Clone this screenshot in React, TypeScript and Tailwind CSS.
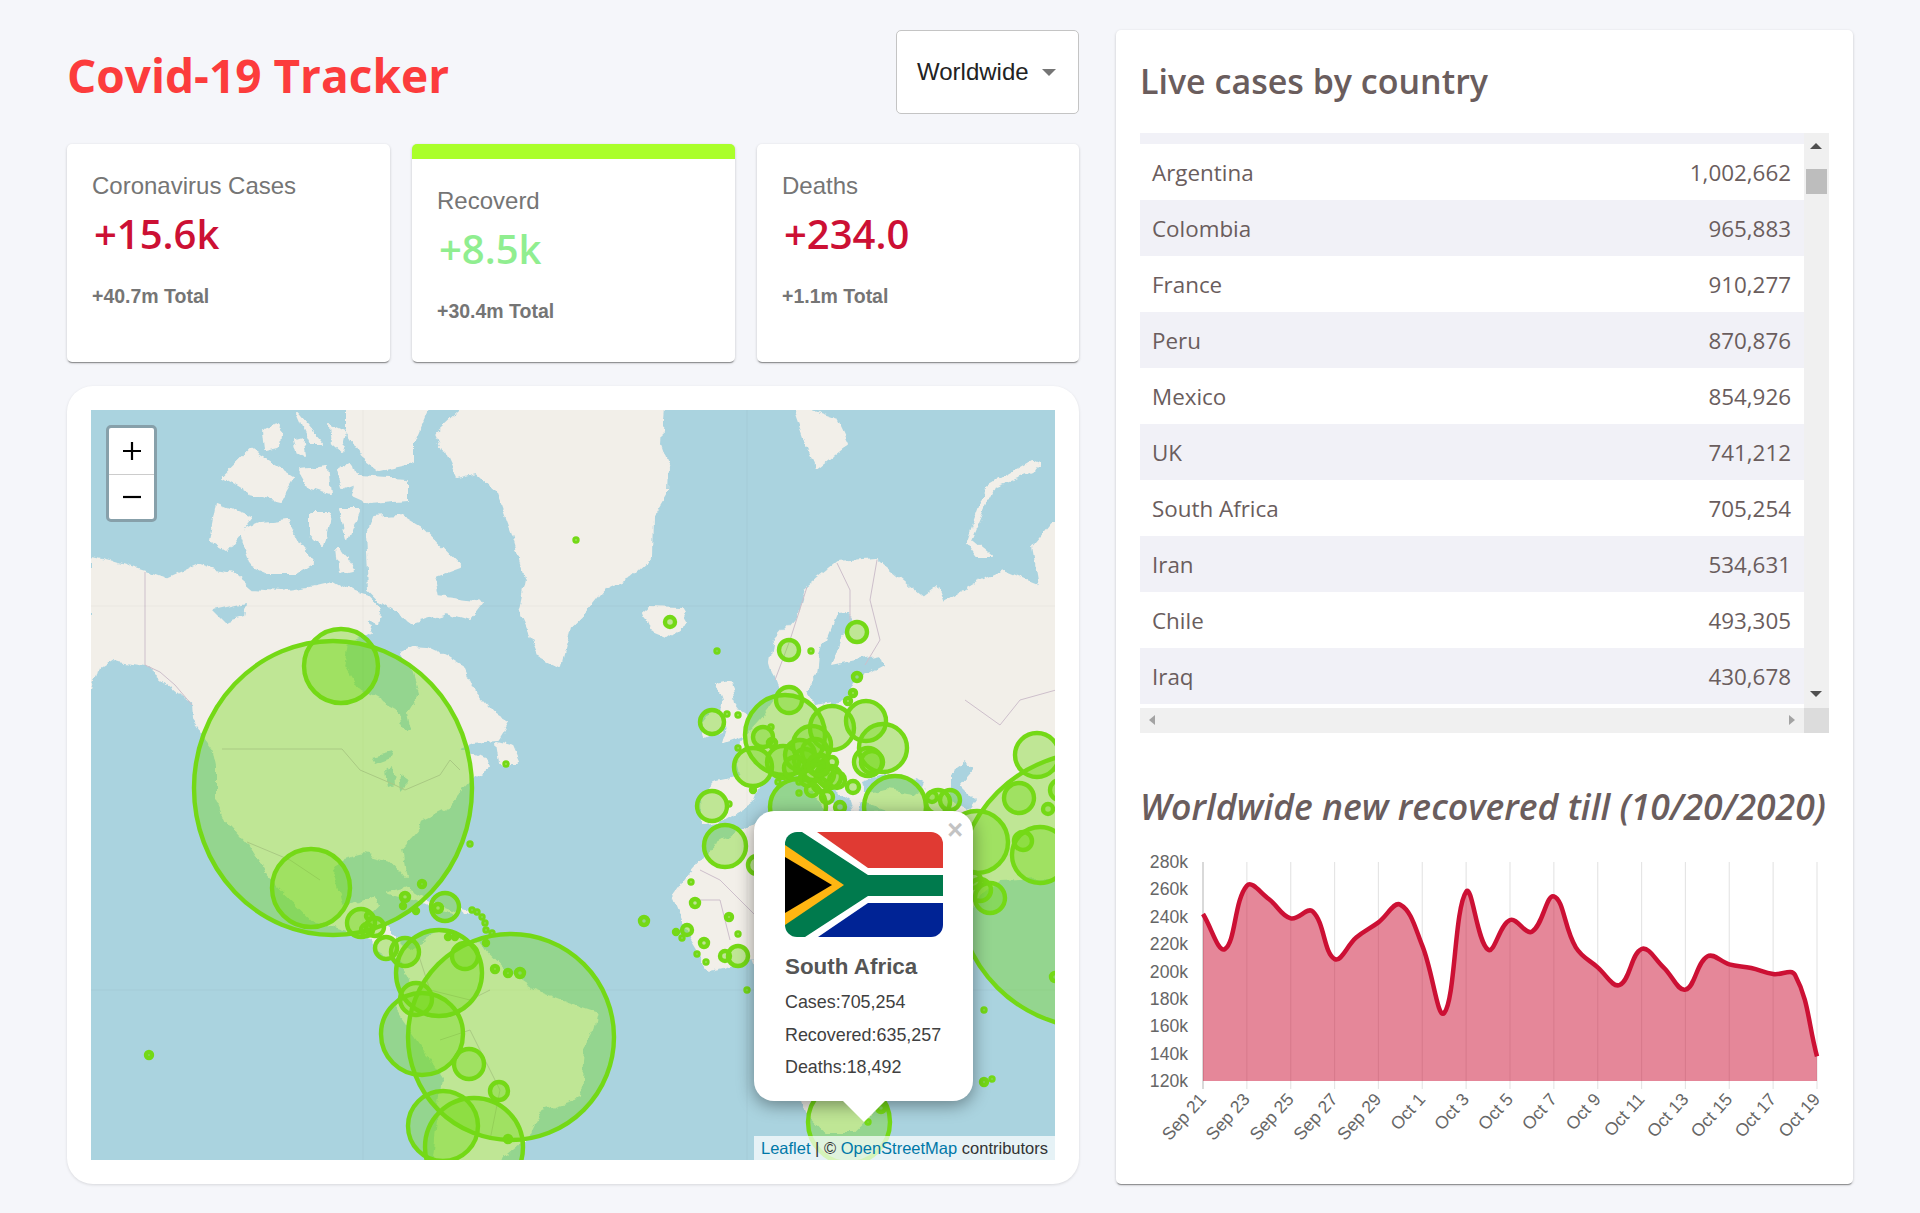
const countries = [
  ['Argentina', '1,002,662'],
  ['Colombia', '965,883'],
  ['France', '910,277'],
  ['Peru', '870,876'],
  ['Mexico', '854,926'],
  ['UK', '741,212'],
  ['South Africa', '705,254'],
  ['Iran', '534,631'],
  ['Chile', '493,305'],
  ['Iraq', '430,678'],
];

// land shapes, in page pixels (the map svg has a matching viewBox)
const land = [
  '91,557 113,562 145,572 167,580 200,565 215,570 233,573 253,590 280,592 307,588 333,582 347,590 370,597 380,607 377,623 363,617 373,633 347,643 343,667 357,690 373,697 397,710 400,723 405,733 412,730 408,713 420,693 413,670 400,653 413,647 427,648 447,657 463,667 473,690 493,713 508,722 497,740 473,742 460,747 488,760 490,767 473,777 447,807 420,820 418,830 400,850 405,877 397,867 390,860 363,853 343,858 333,873 343,907 360,903 373,897 377,907 367,917 390,927 390,933 400,943 413,950 400,957 427,940 443,933 473,943 487,953 507,973 533,990 567,1003 597,1013 593,1030 583,1047 580,1097 540,1110 527,1137 503,1157 500,1165 433,1165 443,1077 413,1033 397,1010 398,1003 410,977 400,957 387,960 373,940 347,930 313,920 283,890 267,873 247,842 227,820 217,797 217,767 213,747 193,720 192,703 160,677 145,665 113,660 97,670 91,693',
  '467,405 663,405 660,443 668,467 667,493 653,517 652,557 630,577 603,590 587,610 570,627 560,667 540,657 520,613 527,580 513,533 497,490 477,472 457,477 437,433',
  '347,405 428,405 413,440 413,463 380,470 363,457 347,433',
  '357,477 407,480 407,500 370,503 352,495',
  '367,533 373,517 400,515 420,527 460,567 433,577 437,597 483,603 470,620 447,613 413,623 395,610 380,600 370,590',
  '240,533 263,523 287,520 300,547 313,563 297,573 267,573 253,567',
  '210,540 217,503 253,517 227,550',
  '223,477 250,450 293,477 280,500 250,493',
  '300,470 327,467 330,493 310,487',
  '297,413 323,443 310,443',
  '310,513 330,513 323,547 310,533',
  '340,510 360,510 347,540',
  '337,547 353,570 340,573',
  '263,430 280,425 278,447 265,450',
  '337,470 352,462 358,482 342,488',
  '330,425 345,432 340,452 332,445',
  '295,440 302,438 305,456 298,452',
  '497,743 513,747 520,763 500,763',
  '793,405 837,420 848,443 817,467 805,440',
  '1040,463 1033,472 993,487 970,540 990,557 977,557 967,543 987,487 1033,460',
  '770,663 773,643 800,613 807,587 837,563 877,560 922,597 897,617 937,587 943,603 977,583 1003,572 1040,587 1033,547 1053,523 1065,523 1065,880 1040,878 1000,880 980,895 960,925 873,1113 853,1133 827,1133 807,1113 753,960 710,970 690,937 673,897 690,873 713,847 757,823 800,815 900,812 920,800 895,812 860,800 855,815 850,800 815,775 838,808 830,812 800,775 780,773 760,783 752,803 723,820 703,823 702,797 713,783 740,777 737,757 740,743 763,717 780,693 775,680',
  '717,683 730,680 735,703 748,720 743,735 723,742 728,727 722,722 723,700',
  '702,723 712,710 725,712 722,730 705,738',
  '643,613 650,607 680,608 688,622 667,637 650,630',
  '387,892 403,888 427,902 457,913 433,907 417,900',
  '463,910 470,912 465,914',
];

// inland water drawn over the land
const water = [
  '820,655 837,613 848,612 853,622 840,640 832,665 880,655 883,665 855,680 845,700 815,705 805,690 818,675',
  '862,782 880,775 900,775 925,785 920,795 885,790 865,795',
  '950,773 965,762 975,768 960,785 975,800 968,810 950,800',
  '213,610 245,603 243,617 225,622',
  '372,757 392,752 395,757 376,764',
  '385,770 392,765 394,785 388,787',
  '398,775 408,782 400,790',
];

const borders = [
  '145,572 145,665 160,672 175,685 192,705',
  '222,749 342,749 360,770 395,785 405,790 440,775 450,760 460,770',
  '247,842 290,860 320,880',
  '807,587 790,640 775,680',
  '837,563 850,590 850,620',
  '877,560 870,600 880,640 865,665',
  '965,700 1000,725 1020,700 1056,690',
  '417,950 430,990 470,1000 490,990',
  '440,1040 470,1030 500,1090 490,1140',
  '700,870 720,880 760,920',
  '690,900 720,900 730,940',
];

// [cx, cy, outer radius, outer radius on y when the circle is stretched]
const circles = [
  [333, 788, 141, 149], [341, 666, 39], [311, 888, 41], [511, 1037, 105], [439, 973, 45], [422, 1034, 43],
  [443, 1126, 37], [474, 1147, 51], [416, 999, 18], [465, 956, 15], [469, 1064, 17], [499, 1091, 11],
  [508, 1139, 5], [361, 923, 16], [375, 927, 11], [367, 930, 8], [369, 916, 5], [386, 948, 13], [405, 952, 16],
  [405, 897, 6], [403, 906, 4], [416, 911, 4], [422, 884, 5], [445, 907, 16], [438, 908, 6],
  [472, 910, 3], [477, 912, 3], [482, 917, 3], [485, 923, 3], [486, 930, 3], [486, 943, 4], [492, 933, 3],
  [448, 937, 4], [455, 937, 4], [495, 969, 5], [508, 973, 5], [520, 973, 6], [149, 1055, 5], [470, 844, 3],
  [506, 764, 3], [576, 540, 3], [670, 622, 7], [717, 651, 3], [789, 650, 12], [811, 651, 3], [857, 632, 12],
  [857, 677, 6], [853, 693, 5], [848, 701, 5], [712, 722, 14], [727, 714, 3], [738, 715, 3],
  [785, 735, 42], [789, 700, 15], [832, 728, 24], [866, 721, 22], [883, 748, 26], [812, 745, 21], [763, 737, 12],
  [753, 767, 21], [712, 806, 17], [725, 846, 23], [757, 865, 11], [798, 807, 30], [895, 807, 33],
  [783, 762, 18], [805, 760, 13], [813, 770, 12], [830, 777, 13], [837, 780, 10], [853, 787, 8], [840, 807, 7],
  [827, 797, 8], [832, 762, 7], [822, 760, 7], [823, 770, 7], [772, 743, 6], [771, 727, 3], [738, 748, 3],
  [800, 755, 17], [815, 752, 15], [795, 768, 13], [808, 778, 10], [820, 785, 9], [812, 790, 8], [825, 775, 11], [818, 765, 12],
  [753, 790, 4], [778, 782, 3], [799, 782, 3], [799, 793, 3], [729, 804, 3], [868, 762, 16], [872, 762, 13],
  [932, 797, 7], [938, 802, 14], [950, 800, 12], [1037, 755, 24], [1095, 890, 140], [977, 842, 33],
  [1019, 798, 17], [1040, 855, 30], [1023, 841, 11], [1048, 809, 7], [1060, 790, 12], [990, 898, 17],
  [980, 890, 13], [973, 880, 10], [691, 882, 3], [695, 903, 6], [644, 921, 6], [729, 917, 5], [676, 932, 4],
  [687, 930, 7], [682, 938, 3], [704, 943, 6], [697, 954, 3], [706, 962, 3], [738, 934, 3], [725, 956, 7],
  [738, 956, 12], [747, 990, 3], [849, 1122, 43], [881, 1108, 6], [868, 1122, 3], [984, 1010, 3], [984, 1082, 5],
  [992, 1079, 3], [1055, 977, 6],
];

const recovered = [225, 330, 140, 180, 238, 217, 360, 295, 250, 197, 320, 522, 158, 332, 243, 278, 172, 325, 385, 438, 330, 385, 452, 352, 376, 387, 405, 408, 652];

const plotLeft = 1203;
const plotRight = 1817;
const plotBottom = 1082;

// same spline chart.js uses for tension 0.4
const buildLine = () => {
  const step = (plotRight - plotLeft) / (recovered.length - 1);
  const pts = recovered.map((z, i) => ({ x: plotLeft + i * step, y: 840 + z / 3 }));
  let d = `M${pts[0].x} ${pts[0].y}`;
  const ctrl = (i: number) => {
    const cur = pts[i];
    const prev = pts[i - 1] ?? cur;
    const next = pts[i + 1] ?? cur;
    const d01 = Math.hypot(cur.x - prev.x, cur.y - prev.y);
    const d12 = Math.hypot(next.x - cur.x, next.y - cur.y);
    const total = d01 + d12 || 1;
    const fa = (0.4 * d01) / total;
    const fb = (0.4 * d12) / total;
    return {
      inX: cur.x - fa * (next.x - prev.x),
      inY: cur.y - fa * (next.y - prev.y),
      outX: cur.x + fb * (next.x - prev.x),
      outY: cur.y + fb * (next.y - prev.y),
    };
  };
  for (let i = 1; i < pts.length; i++) {
    const a = ctrl(i - 1);
    const b = ctrl(i);
    d += ` C${a.outX} ${a.outY} ${b.inX} ${b.inY} ${pts[i].x} ${pts[i].y}`;
  }
  return d;
};

const yTicks = ['280k', '260k', '240k', '220k', '200k', '180k', '160k', '140k', '120k'];
const xTicks = ['Sep 21', 'Sep 23', 'Sep 25', 'Sep 27', 'Sep 29', 'Oct 1', 'Oct 3', 'Oct 5', 'Oct 7', 'Oct 9', 'Oct 11', 'Oct 13', 'Oct 15', 'Oct 17', 'Oct 19'];

function InfoBox({ title, cases, total, active, green }: { title: string; cases: string; total: string; active?: boolean; green?: boolean }) {
  return (
    <div className={`h-[218px] bg-white rounded-[5px] overflow-hidden shadow-[0_2px_1px_-1px_rgba(0,0,0,0.35),0_1px_3px_rgba(0,0,0,0.2)] ${active ? 'border-t-[15px] border-[#aaff2a]' : ''}`}>
      <div className="px-[25px] pt-[26px]">
        <p className="font-['Liberation_Sans',sans-serif] text-[24px] leading-[32px] text-[#757575]">{title}</p>
        <p className={`font-['Open_Sans',sans-serif] font-semibold text-[40px] leading-[56px] mt-[4px] ml-[2px] ${green ? 'text-[#90ee90]' : 'text-[#cc1034]'}`}>{cases}</p>
        <p className="font-['Liberation_Sans',sans-serif] font-bold text-[19.5px] leading-[24px] mt-[22px] text-[#757575]">{total}</p>
      </div>
    </div>
  );
}

function MapPanel() {
  return (
    <div className="relative h-[750px] overflow-hidden bg-[#aad3df]">
      <svg viewBox="91 410 964 750" className="block w-full h-full">
        <defs>
          {/* roughens the plain polygons into coastlines */}
          <filter id="coast" x="-5%" y="-5%" width="110%" height="110%">
            <feTurbulence type="fractalNoise" baseFrequency="0.07" numOctaves="4" seed="4" result="noise" />
            <feDisplacementMap in="SourceGraphic" in2="noise" scale="9" xChannelSelector="R" yChannelSelector="G" />
            <feGaussianBlur stdDeviation="0.5" />
          </filter>
        </defs>
        <g filter="url(#coast)">
          {land.map((points) => <polygon key={points} points={points} fill="#f2efe9" stroke="#f2efe9" strokeWidth="2" strokeLinejoin="round" />)}
          {water.map((points) => <polygon key={points} points={points} fill="#aad3df" />)}
        </g>
        {borders.map((points) => <polyline key={points} points={points} fill="none" stroke="#cdbfcb" strokeWidth="1" />)}
        <g stroke="#000" strokeOpacity="0.03">
          <line x1="363" y1="410" x2="363" y2="1160" />
          <line x1="747" y1="410" x2="747" y2="1160" />
          <line x1="91" y1="606" x2="1055" y2="606" />
          <line x1="91" y1="990" x2="1055" y2="990" />
        </g>
        {circles.map(([cx, cy, r, ry], i) => (
          <ellipse key={i} cx={cx} cy={cy} rx={Math.max(r - 2, 1.5)} ry={Math.max((ry ?? r) - 2, 1.5)} fill="#74d916" fillOpacity="0.4" stroke="#74d916" strokeWidth="4.4" />
        ))}
      </svg>

      <div className="absolute left-[15px] top-[15px] w-[51px] h-[97px] rounded-[5px] border-[3px] border-[#87a0aa] bg-white">
        <div className="h-[47px] flex items-center justify-center border-b border-[#cccccc]">
          <svg width="20" height="20" viewBox="0 0 20 20"><path d="M10 1v18M1 10h18" stroke="#000" strokeWidth="2.2" /></svg>
        </div>
        <div className="h-[44px] flex items-center justify-center">
          <svg width="20" height="4" viewBox="0 0 20 4"><path d="M1 2h18" stroke="#000" strokeWidth="2.2" /></svg>
        </div>
      </div>

      <div className="absolute left-[663px] top-[401px] w-[219px] h-[290px] rounded-[20px] bg-white shadow-[0_4px_17px_rgba(0,0,0,0.4)] font-['Liberation_Sans',sans-serif] text-[#404040]">
        <span className="absolute right-[10px] top-[4px] text-[27px] leading-[30px] font-bold text-[#c3c3c3]">×</span>
        <div className="ml-[31px] mt-[21px] w-[158px] h-[105px] rounded-[12px] overflow-hidden">
          <svg width="158" height="105" viewBox="0 0 158 105" className="block">
            <rect width="158" height="105" fill="#fff" />
            <polygon points="32,0 158,0 158,36 83,36" fill="#e03a33" />
            <polygon points="33,105 83,71 158,71 158,105" fill="#002395" />
            <polygon points="0,0 17,0 83,43 158,43 158,64 83,64 20,105 0,105" fill="#007a4d" />
            <polygon points="0,13 59,53 0,93" fill="#ffb612" />
            <polygon points="0,25 47,53 0,81" fill="#000" />
          </svg>
        </div>
        <p className="ml-[31px] mt-[16px] text-[22.4px] leading-[28px] font-bold text-[#555555]">South Africa</p>
        <p className="ml-[31px] mt-[5px] text-[17.9px] leading-[33px]">Cases:705,254</p>
        <p className="ml-[31px] text-[17.9px] leading-[32px]">Recovered:635,257</p>
        <p className="ml-[31px] text-[17.9px] leading-[32px]">Deaths:18,492</p>
        <div className="absolute left-[89px] top-full w-0 h-0 border-l-[21px] border-r-[21px] border-t-[21px] border-l-transparent border-r-transparent border-t-white" />
      </div>

      <div className="absolute right-0 bottom-0 h-[24px] px-[7px] bg-white/70 font-['Liberation_Sans',sans-serif] text-[16.5px] leading-[24px] text-[#333333] whitespace-nowrap">
        <span className="text-[#0078a8]">Leaflet</span> | © <span className="text-[#0078a8]">OpenStreetMap</span> contributors
      </div>
    </div>
  );
}

function CountryTable() {
  return (
    <div className="mt-[29px] h-[600px] flex flex-col">
      <div className="flex h-[575px]">
        <div className="w-[664px] h-[571px] bg-[#f1f1f7] pt-[11px]">
          {countries.map(([name, cases], i) => (
            <div key={name} className={`h-[56px] flex items-center justify-between pl-[12px] pr-[13px] pt-[2px] text-[22.4px] text-[#6a5d5d] ${i % 2 === 0 ? 'bg-white' : 'bg-[#f1f1f7]'}`}>
              <span>{name}</span>
              <span>{cases}</span>
            </div>
          ))}
        </div>
        <div className="relative w-[25px] bg-[#f0f0f0]">
          <div className="absolute left-[6px] top-[10px] w-0 h-0 border-l-[6px] border-r-[6px] border-b-[6px] border-l-transparent border-r-transparent border-b-[#505050]" />
          <div className="absolute left-[2px] top-[36px] w-[21px] h-[25px] bg-[#bdbdbd]" />
          <div className="absolute left-[6px] bottom-[11px] w-0 h-0 border-l-[6px] border-r-[6px] border-t-[6px] border-l-transparent border-r-transparent border-t-[#505050]" />
        </div>
      </div>
      <div className="flex h-[25px]">
        <div className="relative w-[664px] bg-[#f0f0f0]">
          <div className="absolute left-[9px] top-[7px] w-0 h-0 border-t-[5px] border-b-[5px] border-r-[6px] border-t-transparent border-b-transparent border-r-[#a3a3a3]" />
          <div className="absolute right-[9px] top-[7px] w-0 h-0 border-t-[5px] border-b-[5px] border-l-[6px] border-t-transparent border-b-transparent border-l-[#a3a3a3]" />
        </div>
        <div className="w-[25px] bg-[#dcdcdc]" />
      </div>
    </div>
  );
}

function RecoveredChart() {
  const line = buildLine();
  const step = (plotRight - plotLeft) / (xTicks.length - 1);
  return (
    <svg viewBox="1140 850 700 320" className="block w-[700px] h-[320px] mt-[18px] font-['Liberation_Sans',sans-serif]">
      {xTicks.map((tick, i) => {
        const x = plotLeft + i * step;
        return <line key={tick} x1={x} y1="863" x2={x} y2="1090" stroke="#000" strokeOpacity={i === 0 ? 0.25 : 0.1} strokeWidth="1.2" />;
      })}
      <path d={`${line} L${plotRight} ${plotBottom} L${plotLeft} ${plotBottom} Z`} fill="#cc1034" fillOpacity="0.5" />
      <path d={line} fill="none" stroke="#cc1034" strokeWidth="4.5" />
      {yTicks.map((tick, i) => (
        <text key={tick} x="1188" y={863 + i * 27.4 + 6} textAnchor="end" fontSize="17.6" fill="#666666">{tick}</text>
      ))}
      {xTicks.map((tick, i) => {
        const x = plotLeft + i * step + 4;
        return <text key={tick} x={x} y="1101" textAnchor="end" fontSize="17.6" fill="#666666" transform={`rotate(-48 ${x} 1101)`}>{tick}</text>;
      })}
    </svg>
  );
}

function App() {
  return (
    <div className="w-[1920px] h-[1213px] bg-[#f5f6fa] pl-[67px] pr-[67px] pt-[30px] flex justify-between">
      <div className="w-[1012px]">
        <div className="flex items-center justify-between h-[83px]">
          <h1 className="font-['Open_Sans',sans-serif] font-bold text-[46px] text-[#fc3c3c] leading-none mt-[6px]">Covid-19 Tracker</h1>
          <div className="w-[183px] h-[84px] bg-white border border-[#c4c4c4] rounded-[5px] flex items-center pl-[20px] font-['Liberation_Sans',sans-serif] text-[24px] text-[#222222]">
            <span>Worldwide</span>
            <span className="ml-[13px] mt-[2px] w-0 h-0 border-l-[7px] border-r-[7px] border-t-[7px] border-l-transparent border-r-transparent border-t-[#757575]" />
          </div>
        </div>
        <div className="grid grid-cols-[323px_323px_322px] gap-[22px] mt-[31px]">
          <InfoBox title="Coronavirus Cases" cases="+15.6k" total="+40.7m Total" />
          <InfoBox title="Recoverd" cases="+8.5k" total="+30.4m Total" active green />
          <InfoBox title="Deaths" cases="+234.0" total="+1.1m Total" />
        </div>
        <div className="mt-[24px] h-[798px] p-[24px] bg-white rounded-[26px] shadow-[0_1px_3px_rgba(0,0,0,0.12)]">
          <MapPanel />
        </div>
      </div>

      <div className="w-[737px] h-[1154px] bg-white rounded-[5px] px-[24px] pt-[28px] shadow-[0_2px_1px_-1px_rgba(0,0,0,0.35),0_1px_3px_rgba(0,0,0,0.2)] font-['Open_Sans',sans-serif] text-[#6a5d5d]">
        <h3 className="text-[34px] leading-[46px] font-semibold">Live cases by country</h3>
        <CountryTable />
        <h3 className="mt-[48px] text-[35.6px] leading-[50px] font-semibold italic whitespace-nowrap">Worldwide new recovered till (10/20/2020)</h3>
        <RecoveredChart />
      </div>
    </div>
  );
}

export default App;
